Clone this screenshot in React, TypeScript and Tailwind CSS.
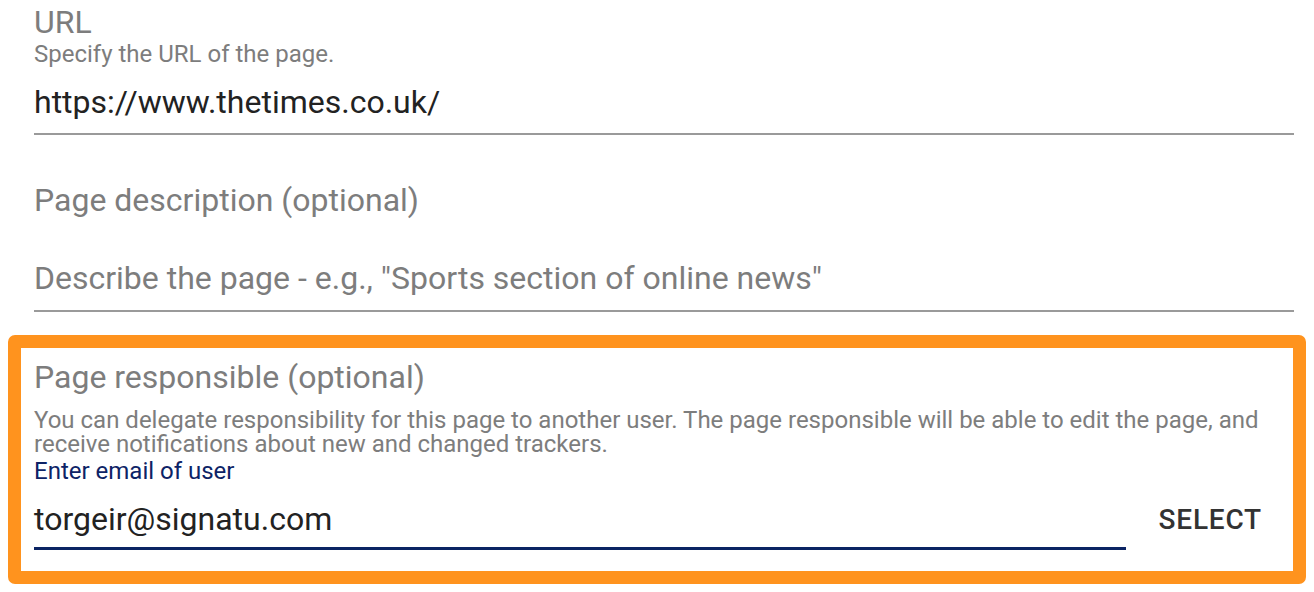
export default function App() {
  return (
    <div className="w-[1314px] h-[592px] bg-white font-['Roboto',sans-serif] overflow-hidden">
      <div className="pl-[34px] pr-[20px] pt-[4px]">
        {/* URL field */}
        <div className="text-[32px] leading-[36px] text-[#7d7d7d]">URL</div>
        <div className="mt-[2px] text-[24px] leading-[24px] text-[#7d7d7d]">Specify the URL of the page.</div>
        <div className="mt-[18px] pb-[13px] border-b-2 border-[#9a9a9a] text-[32px] leading-[36px] text-[#222]">
          https://www.thetimes.co.uk/
        </div>

        {/* description field */}
        <div className="mt-[47px] text-[32px] leading-[36px] text-[#7d7d7d]">Page description (optional)</div>
        <div className="mt-[42px] pb-[14px] border-b-2 border-[#9a9a9a] text-[32px] leading-[36px] text-[#7d7d7d]">
          Describe the page - e.g., "Sports section of online news"
        </div>
      </div>

      <div className="mx-[8px] mt-[23px] border-[13px] border-[#ff931e] rounded-[7px] pl-[13px] pr-[31px] pt-[11px] pb-[21px]">
        <div className="text-[32px] leading-[36px] text-[#7d7d7d]">Page responsible (optional)</div>
        <div className="mt-[13px] text-[24px] leading-[24px] text-[#7d7d7d]">
          You can delegate responsibility for this page to another user. The page responsible will be able to edit the page, and receive notifications about new and changed trackers.
        </div>
        <div className="mt-[3px] text-[24px] leading-[24px] text-[#0d2366]">Enter email of user</div>
        <div className="flex items-end gap-[33px] mt-[18px]">
          <div className="flex-1 pb-[10px] border-b-[3px] border-[#0b2463] text-[32px] leading-[36px] text-[#222]">
            torgeir@signatu.com
          </div>
          <button className="pb-[14px] text-[28px] leading-[32px] font-medium tracking-[0.8px] text-[#333]">
            SELECT
          </button>
        </div>
      </div>
    </div>
  );
}
